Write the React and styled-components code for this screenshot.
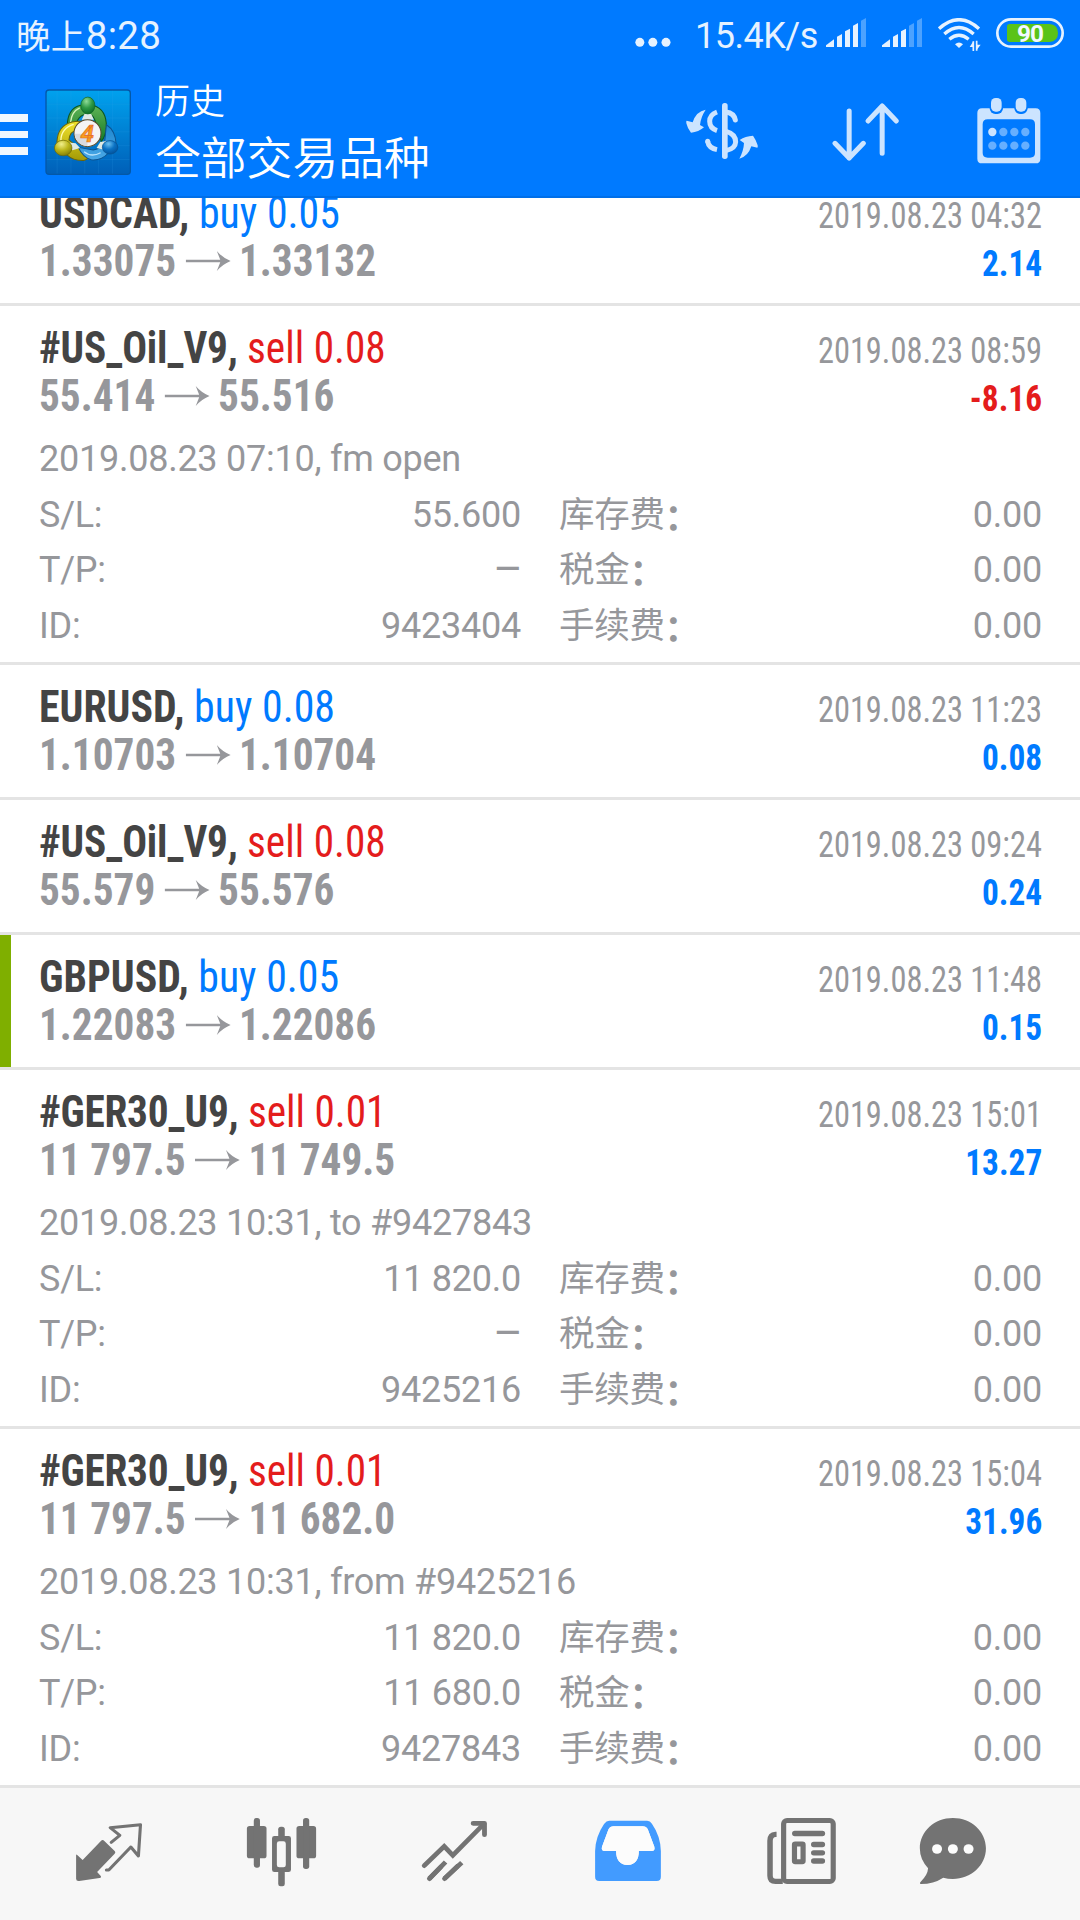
import React from "react";
import styled, { createGlobalStyle } from "styled-components";

const Global = createGlobalStyle`
  body { margin: 0; background: #fff; }
  * { box-sizing: border-box; }
  svg { display: block; flex: none; }
`;

const BLUE = "#007aff";
const RED = "#e41c1c";

const Screen = styled.div`
  width: 1080px;
  height: 1920px;
  display: flex;
  flex-direction: column;
  overflow: hidden;
  background: #fff;
  font-family: Roboto, "Noto Sans CJK SC", sans-serif;
`;

const TopBar = styled.header`
  height: 198px;
  flex: none;
  background: ${BLUE};
  border-bottom: 2px solid #006fe8;
  color: #fff;
`;

const StatusBar = styled.div`
  height: 72px;
  display: flex;
  align-items: flex-start;
  padding: 0 16px;
  color: #e6f2ff;
`;

const Clock = styled.div`
  font-size: 38.5px;
  line-height: 44px;
  padding-top: 12px;
  letter-spacing: 0.35px;
  white-space: nowrap;
`;

const ClockPrefix = styled.span`
  font-family: "Noto Sans CJK SC", sans-serif;
  font-size: 34.5px;
`;

const StatusRight = styled.div`
  margin-left: auto;
  display: flex;
  align-items: flex-start;
  padding-top: 18px;
`;

const Speed = styled.span`
  width: 122px;
  margin: -4px 9px 0 24px;
  font-size: 36px;
  line-height: 44px;
  letter-spacing: -0.5px;
  white-space: nowrap;
`;

const StatusIcon = styled.span`
  margin-left: ${(p) => p.$gap || 0}px;
`;

const ActionBar = styled.div`
  height: 124px;
  display: flex;
  align-items: flex-start;
`;

const MenuButton = styled.div`
  width: 28px;
  margin-top: 42px;
  display: flex;
  flex-direction: column;
  gap: 9px;
`;

const MenuBar = styled.i`
  height: 7.5px;
  background: #f0f7ff;
`;

const LogoBox = styled.div`
  margin: 17px 0 0 17px;
`;

const Titles = styled.div`
  margin-left: 23px;
  font-family: "Noto Sans CJK SC", sans-serif;
  font-weight: 350;
  white-space: nowrap;
`;

const Caption = styled.div`
  font-size: 35px;
  line-height: 50px;
  margin-top: 2px;
`;

const Heading = styled.div`
  font-size: 45.8px;
  line-height: 60px;
  margin-top: 1px;
`;

const Actions = styled.div`
  display: flex;
  align-items: flex-end;
  height: 66px;
  margin: 26px 39px 0 auto;
`;

const ActionIcon = styled.span`
  margin-right: ${(p) => p.$gap}px;
  padding-bottom: ${(p) => p.$lift}px;
`;

const List = styled.main`
  flex: 1;
  min-height: 0;
  overflow: hidden;
`;

const Deals = styled.div`
  margin-top: -27px;
`;

const Deal = styled.section`
  height: ${(p) => (p.$open ? 359 : 135)}px;
  padding: 18px 38px 0 39px;
  border-bottom: 3px solid #e4e4e4;
  background: ${(p) =>
    p.$marked ? "linear-gradient(to right, #7faf00 11px, #fff 11px)" : "#fff"};
`;

const Line = styled.div`
  height: 48px;
  line-height: 48px;
  display: flex;
  align-items: baseline;
  justify-content: space-between;
  white-space: nowrap;
  font-family: "Roboto Condensed", Roboto, sans-serif;
  font-stretch: 75%;
`;

const Title = styled.div`
  font-size: 45px;
  transform: scaleX(${(p) => (p.$tight ? 0.917 : 0.93)});
  transform-origin: left;
  color: ${(p) => (p.$sell ? RED : BLUE)};
`;

const Symbol = styled.b`
  color: #444;
  letter-spacing: ${(p) => (p.$tight ? -0.25 : 0)}px;
`;

const Prices = styled.div`
  font-size: 45px;
  font-weight: 700;
  transform: scaleX(0.917);
  transform-origin: left;
  color: #96979b;
  display: flex;
  align-items: baseline;
`;

const ArrowSlot = styled.span`
  display: inline-block;
  margin: 0 8.5px 0 10.5px;
  padding-bottom: 5px;
`;

const Time = styled.div`
  font-size: 36px;
  transform: scaleX(0.9);
  transform-origin: right;
  color: #96979b;
`;

const Profit = styled.div`
  font-size: 36px;
  font-weight: 700;
  transform: scaleX(0.925);
  transform-origin: right;
  color: ${(p) => (p.$loss ? RED : BLUE)};
`;

const Details = styled.div`
  margin-top: 12px;
  font-size: 36px;
  line-height: 55.5px;
  letter-spacing: -0.25px;
  color: #96979b;
  white-space: nowrap;
`;

const Comment = styled.div`
  height: 55.5px;
`;

const Fields = styled.div`
  display: grid;
  grid-template-columns: 120px 362px 200px 1fr;
  grid-auto-rows: 55.5px;
`;

const Field = styled.span`
  text-align: ${(p) => (p.$right ? "right" : "left")};
`;

const FeeLabel = styled.span`
  padding-left: 38px;
  font-size: 35.5px;
  letter-spacing: -0.3px;
`;

const Colon = styled.b`
  line-height: 30px;
  vertical-align: -3px;
`;

const Dash = styled.span`
  margin-right: -1.5px;
  font-size: 45px;
  line-height: 40px;
  vertical-align: -2px;
`;

const TabBar = styled.nav`
  height: 132px;
  flex: none;
  background: #f7f7f7;
  display: flex;
  align-items: flex-start;
  gap: 101px;
  padding: 28px 0 0 73px;
`;

const Tab = styled.span`
  margin-left: ${(p) => p.$shift || 0}px;
`;

const SignalIcon = ({ level }) => {
  const tops = [64, 48, 32, 15, 0];
  return (
    <svg width="40" height="29" viewBox="0 0 120 87">
      {tops.map((t, i) => {
        const x = i === 0 ? 0 : 33 + (i - 1) * 24;
        const w = i === 0 ? 24 : 15;
        return (
          <path
            key={t}
            d={`M${x} ${i === 0 ? 82 : t + 8} L${x + w} ${t} V87 H${x} Z`}
            fill={i < level ? "#e6f2ff" : "#4ca2ff"}
          />
        );
      })}
    </svg>
  );
};

const WifiIcon = () => (
  <svg width="43" height="33" viewBox="954 54 129 99" fill="none" stroke="#e6f2ff" strokeWidth="10">
    <path d="M957 86 Q1017 32 1077 86" />
    <path d="M973 102 Q1017 63 1061 102" />
    <path d="M988 118 Q1017 94 1046 118" />
    <path d="M1005 133 Q1017 122 1029 133 L1017 144 Z" fill="#e6f2ff" stroke="none" />
    <path d="M1060 124 V153 M1070 122 V152" strokeWidth="5" />
    <path d="M1049 141 L1060 124 V141 Z M1070 134 H1082 L1070 150 Z" fill="#e6f2ff" stroke="none" />
  </svg>
);

const BatteryIcon = () => (
  <svg width="68" height="30" viewBox="0 0 204 90">
    <rect x="4" y="4" width="196" height="82" rx="41" fill="none" stroke="#e6f2ff" strokeWidth="8" />
    <path d="M41 18 H160 Q186 20 186 45 Q186 70 160 72 H41 Q33 72 33 64 V26 Q33 18 41 18Z" fill="#5ac318" />
    <text x="102" y="71" textAnchor="middle" fill="#f2f9ff" fontFamily="Roboto, sans-serif" fontWeight="700" fontSize="73" letterSpacing="-3">90</text>
  </svg>
);

const Logo = () => (
  <svg width="87" height="87" viewBox="48 27 256 258">
    <defs>
      <linearGradient id="sky" x1="0" y1="0" x2="0" y2="1">
        <stop offset="0" stopColor="#00a2ee" />
        <stop offset="1" stopColor="#005fb8" />
      </linearGradient>
      <linearGradient id="green" x1="0" y1="0" x2="0" y2="1">
        <stop offset="0" stopColor="#5fb356" />
        <stop offset="1" stopColor="#147a28" />
      </linearGradient>
      <linearGradient id="yellow" x1="0" y1="0" x2="0" y2="1">
        <stop offset="0" stopColor="#f0e22c" />
        <stop offset="1" stopColor="#a39a06" />
      </linearGradient>
      <linearGradient id="azure" x1="0" y1="0" x2="0" y2="1">
        <stop offset="0" stopColor="#1c86cf" />
        <stop offset="1" stopColor="#4aa8e6" />
      </linearGradient>
      <radialGradient id="greenBall" cx=".4" cy=".25" r=".8">
        <stop offset="0" stopColor="#8fdc98" />
        <stop offset=".5" stopColor="#2f9a45" />
        <stop offset="1" stopColor="#0a6a22" />
      </radialGradient>
      <radialGradient id="yellowBall" cx=".4" cy=".25" r=".8">
        <stop offset="0" stopColor="#f1ef8c" />
        <stop offset=".5" stopColor="#bdb71c" />
        <stop offset="1" stopColor="#7f7a05" />
      </radialGradient>
      <radialGradient id="blueBall" cx=".4" cy=".25" r=".8">
        <stop offset="0" stopColor="#6cc0f0" />
        <stop offset=".5" stopColor="#0a72c4" />
        <stop offset="1" stopColor="#024f98" />
      </radialGradient>
    </defs>
    <rect x="50" y="30" width="250" height="250" rx="9" fill="url(#sky)" stroke="#0458a8" strokeWidth="4" />
    <path d="M83 32V278M124 32V278M165 32V278M206 32V278M247 32V278M52 72H298M52 113H298M52 154H298M52 195H298M52 236H298" stroke="#35a6ea" strokeOpacity=".22" strokeWidth="2" />
    <path d="M113 136 Q114 86 150 76 L191 76 Q230 88 229 140 Q228 165 214 183 L200 140 Q196 112 184 104 L160 104 Q146 110 140 128 Z" fill="url(#green)" stroke="#0d5520" strokeWidth="3" />
    <path d="M123 125 Q126 94 150 83" fill="none" stroke="#d4f2ba" strokeWidth="4" />
    <path d="M152 123 Q100 122 86 162 Q80 184 84 196 L112 222 Q130 240 162 239 Q178 236 174 222 L150 205 L118 178 Q120 152 145 148 Z" fill="url(#yellow)" stroke="#6b6408" strokeWidth="3" />
    <path d="M94 180 Q95 143 132 132" fill="none" stroke="#fffbb0" strokeWidth="4" />
    <path d="M229 133 Q256 150 258 190 L236 216 Q214 240 184 237 Q158 228 146 200 L190 208 Q214 204 224 184 Z" fill="url(#azure)" stroke="#0c538f" strokeWidth="3" />
    <path d="M163 213 Q184 231 212 216" fill="none" stroke="#b8e2fb" strokeWidth="4" />
    <path d="M118 186 L138 188 L151 202 L128 209 Z M211 184 L229 181 L222 207 L200 202 Z M164 101 L184 101 L192 118 L156 118 Z" fill="#dfe9e4" />
    <ellipse cx="174" cy="76" rx="21" ry="25" fill="url(#greenBall)" stroke="#0e6326" strokeWidth="2" />
    <ellipse cx="101" cy="202" rx="26" ry="23" fill="url(#yellowBall)" stroke="#6d6808" strokeWidth="2" />
    <ellipse cx="240" cy="200" rx="23" ry="20" fill="url(#blueBall)" stroke="#06508f" strokeWidth="2" />
    <circle cx="173" cy="158" r="40" fill="#f4f4f5" stroke="#5c4d2c" strokeWidth="3" />
    <path d="M135 160 H173 V196 A38 38 0 0 1 135 160Z" fill="#d9dade" />
    <text x="172" y="184" textAnchor="middle" fontFamily="Roboto, sans-serif" fontStyle="italic" fontWeight="700" fontSize="72" fill="#f9a01b" stroke="#e4682c" strokeWidth="2">4</text>
  </svg>
);

const CurrencyIcon = () => (
  <svg width="72" height="58" viewBox="198 304 216 174" fill="#cce4ff">
    <path d="M257 327 Q228 332 218 365 L200 360 Q198 361 199 368 Q203 385 213 396 Q236 394 252 380 L240 373 Q242 350 257 327Z" />
    <path d="M358 474 Q384 468 394 437 L412 441 Q414 440 413 434 Q408 417 399 405 Q376 406 359 418 L372 427 Q371 450 358 474Z" />
    <rect x="306" y="307" width="17" height="168" rx="8" />
    <g fill="none" stroke="#cce4ff" strokeWidth="15">
      <path d="M291 334 Q269 342 269 362 Q269 383 291 390" />
      <path d="M291 447 Q266 442 263 422" />
      <path d="M318 334 Q342 337 346 358" strokeLinecap="round" />
      <path d="M318 392 Q347 400 347 424 Q346 444 318 450" />
    </g>
    <circle cx="263" cy="422" r="7.5" />
  </svg>
);

const SortIcon = () => (
  <svg width="68" height="60" viewBox="634 304 204 180" fill="none" stroke="#cce4ff" strokeWidth="15" strokeLinecap="round" strokeLinejoin="round">
    <path d="M685.500 331 V472 M643 428 L685.500 472 L728 428" />
    <path d="M784.500 458 V316 M742 361 L784.500 316 L827 361" />
  </svg>
);

const CalendarIcon = () => (
  <svg width="64" height="66" viewBox="1070 293 192 198">
    <path fillRule="evenodd" fill="#cce4ff" d="M1085 324 H1246 Q1260 324 1260 338 V475 Q1260 489 1246 489 H1085 Q1071 489 1071 475 V338 Q1071 324 1085 324Z M1102 357 Q1087 357 1087 372 V458 Q1087 472 1102 472 H1229 Q1244 472 1244 458 V372 Q1244 357 1229 357Z" />
    {[1128, 1202].map((x) => (
      <rect key={x} x={x - 20} y="290" width="40" height="51" rx="17" fill={BLUE} stroke="none" />
    ))}
    {[1128, 1202].map((x) => (
      <rect key={x} x={x - 16} y="293" width="32" height="41" rx="14" fill="#cce4ff" />
    ))}
    {[1116, 1149, 1182, 1215].map((x, i) => (
      <g key={x} fill="#66afff">
        <circle cx={x} cy="395" r="12.500" fill={i ? "#66afff" : "#cce4ff"} />
        <circle cx={x} cy="436" r="12.500" />
      </g>
    ))}
  </svg>
);

const TabSvg = ({ x, children }) => (
  <svg width="72" height="72" viewBox={`${x} 108 209.100 216`} preserveAspectRatio="none" fill="#737373" stroke="none">
    {children}
  </svg>
);

const QuotesIcon = () => (
  <TabSvg x={212}>
    <path d="M221 225 Q222 222 225 226 L240 240 L293 183 Q298 177 303 183 L333 213 Q337 217 333 221 L282 276 L292 287 Q296 292 289 294 L230 303 Q221 304 221 296Z" />
    <path d="M323 187 L348 166 L320 143 L408 134 L402 228 L380 201 L316 270 H309" fill="none" stroke="#737373" strokeWidth="9" strokeLinecap="round" strokeLinejoin="round" />
  </TabSvg>
);

const CandlesIcon = () => (
  <TabSvg x={714.4}>
    <rect x="717" y="138" width="57" height="97" rx="8" />
    <rect x="737" y="114" width="18" height="149" rx="8" />
    <rect x="861" y="138" width="57" height="97" rx="8" />
    <rect x="880" y="114" width="18" height="153" rx="8" />
    <rect x="808" y="140" width="19" height="40" rx="8" />
    <rect x="808" y="266" width="19" height="53" rx="7" />
    <path fillRule="evenodd" d="M797 168 H838 Q845 168 845 175 V269 Q845 276 838 276 H797 Q790 276 790 269 V175 Q790 168 797 168Z M811 184 Q804 184 804 191 V255 Q804 262 811 262 H823 Q830 262 830 255 V191 Q830 184 823 184Z" />
  </TabSvg>
);

const TradeIcon = () => (
  <TabSvg x={1216.8}>
    <g fill="none" stroke="#737373" strokeWidth="14" strokeLinecap="round">
      <path d="M1232 257 L1290 199 L1315 226 L1405 132" />
      <path d="M1374 130 H1407 V164" strokeLinejoin="round" />
      <path d="M1247 296 L1294 246 M1291 296 L1341 248" strokeLinecap="butt" />
      <path d="M1247 296 L1280 261 M1291 296 L1328 259" />
    </g>
  </TabSvg>
);

const InboxIcon = () => (
  <TabSvg x={151}>
    <path fill="#429bff" fillRule="evenodd" d="M201 122 H311 Q320 122 325 131 Q350 168 351 213 V290 Q351 303 339 303 H172 Q160 303 160 290 V213 Q161 170 186 132 Q193 122 201 122Z M214 139 Q203 139 199 148 L180 200 Q177 213 188 213 H221 Q221 254 254 255 Q287 254 287 213 H324 Q335 213 332 200 L313 148 Q309 139 298 139Z" />
    <path fill="#fcfcfc" d="M214 139 Q203 139 199 148 L180 200 Q177 213 188 213 H221 Q221 254 254 255 Q287 254 287 213 H324 Q335 213 332 200 L313 148 Q309 139 298 139Z" />
  </TabSvg>
);

const NewsIcon = () => (
  <TabSvg x={653.4}>
    <g fill="none" stroke="#737373">
      <rect x="707.500" y="121.500" width="144" height="183" rx="10" strokeWidth="15" />
      <path d="M687 163 H684 Q668 164 668 182 V287 Q668 304 684 304 H705" strokeWidth="16" />
      <path d="M740 160.500 H820" strokeWidth="16" strokeLinecap="round" />
      <path d="M795 193.500 H820 M795 218.500 H820 M795 243 H820" strokeWidth="16" strokeLinecap="round" />
      <rect x="739" y="192" width="25" height="53" rx="2" strokeWidth="15" />
    </g>
  </TabSvg>
);

const ChatIcon = () => (
  <TabSvg x={1097.7}>
    <path d="M1199 114 C1252 114 1295 154 1295 205 C1295 256 1252 297 1199 297 Q1184 297 1171 293 Q1143 312 1106 312 Q1101 311 1105 306 Q1126 285 1127 265 Q1103 238 1103 205 C1103 154 1146 114 1199 114Z" />
    {[1153, 1199, 1244.5].map((x) => (
      <circle key={x} cx={x} cy="207" r="14.500" fill="#fcfcfc" />
    ))}
  </TabSvg>
);

const PriceArrow = () => (
  <svg width="49.5" height="20" viewBox="0 0 46 20" preserveAspectRatio="none">
    <path d="M0 8.700 H35 L31.500 0 Q37 6.500 45.500 10 Q37 13.500 31.500 20 L35 11.300 H0Z" fill="#96979b" />
  </svg>
);

const deals = [
  { symbol: "USDCAD", side: "buy", lots: "0.05", from: "1.33075", to: "1.33132", time: "2019.08.23 04:32", profit: "2.14" },
  { symbol: "#US_Oil_V9", side: "sell", lots: "0.08", from: "55.414", to: "55.516", time: "2019.08.23 08:59", profit: "-8.16",
    details: { comment: "2019.08.23 07:10, fm open", sl: "55.600", tp: "–", id: "9423404" } },
  { symbol: "EURUSD", side: "buy", lots: "0.08", from: "1.10703", to: "1.10704", time: "2019.08.23 11:23", profit: "0.08" },
  { symbol: "#US_Oil_V9", side: "sell", lots: "0.08", from: "55.579", to: "55.576", time: "2019.08.23 09:24", profit: "0.24" },
  { symbol: "GBPUSD", side: "buy", lots: "0.05", from: "1.22083", to: "1.22086", time: "2019.08.23 11:48", profit: "0.15", marked: true },
  { symbol: "#GER30_U9", side: "sell", lots: "0.01", from: "11 797.5", to: "11 749.5", time: "2019.08.23 15:01", profit: "13.27",
    details: { comment: "2019.08.23 10:31, to #9427843", sl: "11 820.0", tp: "–", id: "9425216" } },
  { symbol: "#GER30_U9", side: "sell", lots: "0.01", from: "11 797.5", to: "11 682.0", time: "2019.08.23 15:04", profit: "31.96",
    details: { comment: "2019.08.23 10:31, from #9425216", sl: "11 820.0", tp: "11 680.0", id: "9427843" } },
];

const Fee = ({ name }) => (
  <FeeLabel>
    {name}
    <Colon>：</Colon>
  </FeeLabel>
);

const DealDetails = ({ comment, sl, tp, id }) => (
  <Details>
    <Comment>{comment}</Comment>
    <Fields>
      <Field>S/L:</Field>
      <Field $right>{sl}</Field>
      <Fee name="库存费" />
      <Field $right>0.00</Field>
      <Field>T/P:</Field>
      <Field $right>{tp === "–" ? <Dash>–</Dash> : tp}</Field>
      <Fee name="税金" />
      <Field $right>0.00</Field>
      <Field>ID:</Field>
      <Field $right>{id}</Field>
      <Fee name="手续费" />
      <Field $right>0.00</Field>
    </Fields>
  </Details>
);

const DealRow = ({ deal }) => {
  const tight = deal.symbol.startsWith("#");
  return (
    <Deal $open={!!deal.details} $marked={deal.marked}>
      <Line>
        <Title $sell={deal.side === "sell"} $tight={tight}>
          <Symbol $tight={tight}>{deal.symbol},</Symbol> {deal.side} {deal.lots}
        </Title>
        <Time>{deal.time}</Time>
      </Line>
      <Line>
        <Prices>
          {deal.from}
          <ArrowSlot><PriceArrow /></ArrowSlot>
          {deal.to}
        </Prices>
        <Profit $loss={deal.profit.startsWith("-")}>{deal.profit}</Profit>
      </Line>
      {deal.details && <DealDetails {...deal.details} />}
    </Deal>
  );
};

export default function App() {
  return (
    <Screen>
      <Global />
      <TopBar>
        <StatusBar>
          <Clock><ClockPrefix>晚上</ClockPrefix>8:28</Clock>
          <StatusRight>
            <svg width="36" height="30" viewBox="44 54 108 90" fill="#e6f2ff">
              <circle cx="58.500" cy="127" r="13.500" />
              <circle cx="97.500" cy="127" r="13.500" />
              <circle cx="137" cy="127" r="13.500" />
            </svg>
            <Speed>15.4K/s</Speed>
            <SignalIcon level={4} />
            <StatusIcon $gap={16}><SignalIcon level={3} /></StatusIcon>
            <StatusIcon $gap={16}><WifiIcon /></StatusIcon>
            <StatusIcon $gap={15}><BatteryIcon /></StatusIcon>
          </StatusRight>
        </StatusBar>
        <ActionBar>
          <MenuButton><MenuBar /><MenuBar /><MenuBar /></MenuButton>
          <LogoBox><Logo /></LogoBox>
          <Titles>
            <Caption>历史</Caption>
            <Heading>全部交易品种</Heading>
          </Titles>
          <Actions>
            <ActionIcon $gap={74} $lift={4}><CurrencyIcon /></ActionIcon>
            <ActionIcon $gap={77} $lift={2}><SortIcon /></ActionIcon>
            <ActionIcon $gap={0} $lift={0}><CalendarIcon /></ActionIcon>
          </Actions>
        </ActionBar>
      </TopBar>
      <List>
        <Deals>
          {deals.map((d, i) => <DealRow key={i} deal={d} />)}
        </Deals>
      </List>
      <TabBar>
        <Tab><QuotesIcon /></Tab>
        <Tab><CandlesIcon /></Tab>
        <Tab><TradeIcon /></Tab>
        <Tab><InboxIcon /></Tab>
        <Tab><NewsIcon /></Tab>
        <Tab $shift={-20}><ChatIcon /></Tab>
      </TabBar>
    </Screen>
  );
}
